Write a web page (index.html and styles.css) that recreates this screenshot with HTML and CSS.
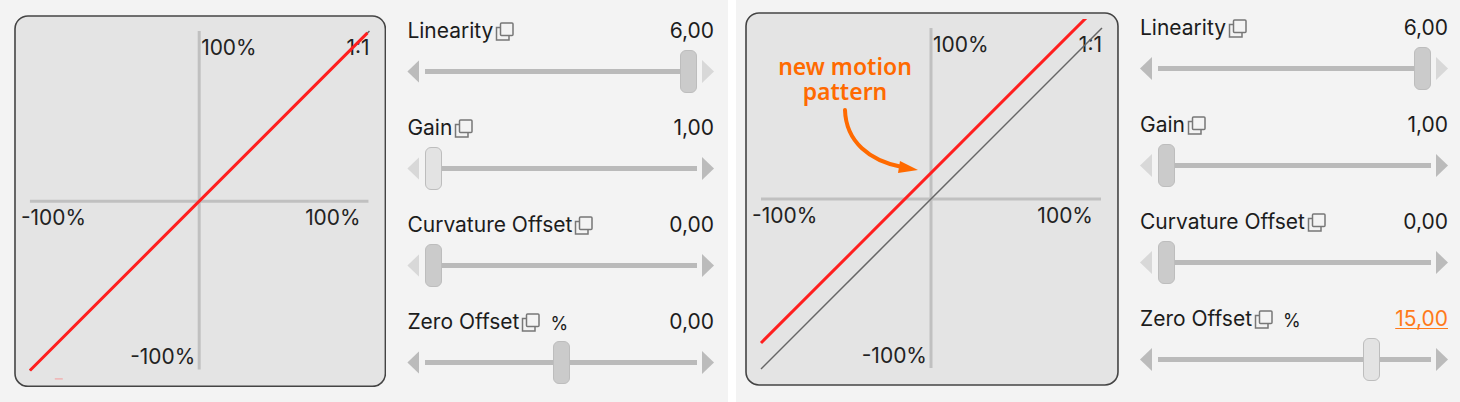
FILE: index.html
```html
<!DOCTYPE html>
<html lang="en">
<head>
    <meta charset="UTF-8">
    <meta name="viewport" content="width=device-width, initial-scale=1.0">
    <title>Zero Offset</title>
    <link rel="stylesheet" href="styles.css">
</head>
<body>
    <!-- shared copy icon -->
    <svg class="defs" aria-hidden="true">
        <symbol id="copy" viewBox="0 0 19 19">
            <path d="M5 5.5H1.5V18H14V14" fill="none" stroke="#777" stroke-width="1.5"/>
            <rect x="5.5" y="1" width="12.5" height="12.5" rx="1" fill="#f3f3f3" stroke="#777" stroke-width="1.5"/>
        </symbol>
    </svg>
    <main class="compare">
        <section class="panel before">
            <svg class="chart" viewBox="0 0 374 374" role="img" aria-label="Motion curve">
                <rect class="frame" x="1" y="1" width="372" height="372" rx="13"/>
                <path class="axis" d="M186 16V356M16 187H356"/>
                <text x="188" y="40">100%</text>
                <text x="7" y="211">-100%</text>
                <text class="end" x="348" y="211">100%</text>
                <text class="end" x="182" y="351">-100%</text>
                <text class="end" x="357" y="40">1:1</text>
                <path class="ratio" d="M16 357L357 16"/>
                <path class="curve" d="M16 357L355 18"/>
                <path class="trace" d="M41 365.5H49"/>
            </svg>
            <div class="controls"></div>
        </section>
        <section class="panel after">
            <svg class="chart" viewBox="0 0 374 374" role="img" aria-label="Motion curve with offset">
                <rect class="frame" x="1" y="1" width="372" height="372" rx="13"/>
                <path class="axis" d="M186 16V356M16 187H356"/>
                <text x="188" y="40">100%</text>
                <text x="7" y="211">-100%</text>
                <text class="end" x="348" y="211">100%</text>
                <text class="end" x="182" y="351">-100%</text>
                <text class="end" x="357" y="40">1:1</text>
                <path class="ratio" d="M16 357L357 16"/>
                <clipPath id="plot"><rect x="14" y="7" width="346" height="352"/></clipPath>
                <path class="curve" d="M16 331L344 3" clip-path="url(#plot)"/>
                <text class="note"><tspan x="100" y="63">new motion</tspan><tspan x="100" y="88">pattern</tspan></text>
                <path class="arrow" d="M100 98C101 130 125 149 157 155"/>
                <path class="arrow-head" d="M173 158L155 149L153 161Z"/>
            </svg>
            <div class="controls"></div>
        </section>
    </main>
    <script>
        const before = [
            { name: "Linearity", min: 1, max: 6, value: 6 },
            { name: "Gain", min: 1, max: 10, value: 1, active: true },
            { name: "Curvature Offset", min: 0, max: 1, value: 0 },
            { name: "Zero Offset", min: -25, max: 25, value: 0, unit: "%" }
        ];
        const after = [
            { name: "Linearity", min: 1, max: 6, value: 6 },
            { name: "Gain", min: 1, max: 10, value: 1 },
            { name: "Curvature Offset", min: 0, max: 1, value: 0 },
            { name: "Zero Offset", min: -25, max: 25, value: 15, unit: "%", active: true, changed: true }
        ];

        function format(value) {
            return Number(value).toFixed(2).replace(".", ",");
        }

        function render(panel, items) {
            const controls = document.querySelector("." + panel + " .controls");
            controls.innerHTML = items.map((item, i) => {
                const id = panel + i;
                const value = item.changed
                    ? `<a class="value changed" href="#${id}">${format(item.value)}</a>`
                    : `<output class="value" for="${id}">${format(item.value)}</output>`;
                return `<div class="control">
                    <div class="head">
                        <label for="${id}">${item.name}</label>
                        <button class="copy" aria-label="Copy ${item.name}"><svg><use href="#copy"/></svg></button>
                        ${item.unit ? `<span class="unit">${item.unit}</span>` : ""}
                        ${value}
                    </div>
                    <div class="slider">
                        <button class="step down" aria-label="Decrease" ${item.value === item.min ? "disabled" : ""}></button>
                        <input class="${item.active ? "active" : ""}" type="range" id="${id}" min="${item.min}" max="${item.max}" step="0.01" value="${item.value}">
                        <button class="step up" aria-label="Increase" ${item.value === item.max ? "disabled" : ""}></button>
                    </div>
                </div>`;
            }).join("");
        }

        render("before", before);
        render("after", after);

        document.querySelectorAll(".control").forEach(control => {
            const input = control.querySelector("input");
            const down = control.querySelector(".down");
            const up = control.querySelector(".up");

            function update() {
                control.querySelector(".value").textContent = format(input.value);
                down.disabled = input.value === input.min;
                up.disabled = input.value === input.max;
            }

            input.addEventListener("input", update);
            down.addEventListener("click", () => { input.stepDown(); update(); });
            up.addEventListener("click", () => { input.stepUp(); update(); });
        });
    </script>
</body>
</html>
```
FILE: styles.css
```css
* {
    box-sizing: border-box;
    margin: 0;
    padding: 0;
}
body {
    font-family: Inter, "Liberation Sans", sans-serif;
    font-size: 21px;
    line-height: 24px;
    color: #1c1c1c;
    background: #fff;
}
button {
    border: none;
    background: none;
    cursor: pointer;
}
.defs {
    position: absolute;
    width: 0;
    height: 0;
}
.compare {
    display: grid;
    grid-template-columns: 728fr 724fr;
    gap: 8px;
    min-height: 100vh;
}
.panel {
    display: flex;
    align-items: flex-start;
    gap: 21px;
    background: #f3f3f3;
}
.before {
    padding: 15px 14px 14px;
}
.after {
    padding: 12px 12px 12px 9px;
}

/* chart */
.chart {
    display: block;
    flex: none;
    width: 53.2%;
}
.chart text {
    fill: #222;
}
.chart .end {
    text-anchor: end;
}
.chart .note {
    font-family: "Noto Sans", sans-serif;
    font-size: 23px;
    font-weight: 600;
    text-anchor: middle;
    fill: #ff6a00;
}
.frame {
    fill: #e4e4e4;
    stroke: #444;
    stroke-width: 1.6;
}
.axis {
    fill: none;
    stroke: #c0c0c0;
    stroke-width: 3;
}
.ratio {
    stroke: #666;
    stroke-width: 1.5;
}
.curve {
    stroke: #ff1f1f;
    stroke-width: 3;
}
.trace {
    fill: none;
    stroke: #f79a9a;
    stroke-width: 1;
}
.arrow {
    fill: none;
    stroke: #ff6a00;
    stroke-width: 4;
    stroke-linecap: round;
}
.arrow-head {
    fill: #ff6a00;
}

/* sliders */
.controls {
    flex: 1;
    min-width: 0;
    display: flex;
    flex-direction: column;
    gap: 23px;
    padding-top: 4px;
}
.head {
    display: flex;
    align-items: center;
    margin-bottom: 7px;
}
.copy {
    width: 19px;
    height: 19px;
    margin-left: 2px;
}
.copy svg {
    display: block;
    width: 19px;
    height: 19px;
}
.unit {
    margin-left: 10px;
    padding-top: 4px;
    font-size: 18px;
    line-height: 20px;
}
.value {
    margin-left: auto;
}
.changed {
    color: #ff7a1a;
    text-decoration: underline;
    text-decoration-thickness: 1px;
    text-underline-offset: 2px;
    text-decoration-skip-ink: none;
}
.slider {
    display: flex;
    align-items: center;
}
.step {
    flex: none;
    width: 12px;
    height: 23px;
    background: #bbb;
}
.step:disabled {
    background: #d8d8d8;
}
.down {
    clip-path: polygon(0 50%, 100% 0, 100% 100%);
}
.up {
    clip-path: polygon(0 0, 100% 50%, 0 100%);
}
.slider input {
    flex: 1;
    min-width: 0;
    height: 43px;
    margin: 0 5px 0 6px;
    appearance: none;
    background: none;
}
.slider input::-webkit-slider-runnable-track {
    height: 5px;
    background: #bababa;
}
.slider input::-webkit-slider-thumb {
    appearance: none;
    width: 17px;
    height: 43px;
    margin-top: -19px;
    border: 1px solid #bdbdbd;
    border-radius: 6px;
    background: #cbcbcb;
}
.slider input.active::-webkit-slider-thumb {
    background: #e3e3e3;
}
@media (max-width: 1200px) {
    .compare {
        grid-template-columns: 1fr;
    }
}
```
